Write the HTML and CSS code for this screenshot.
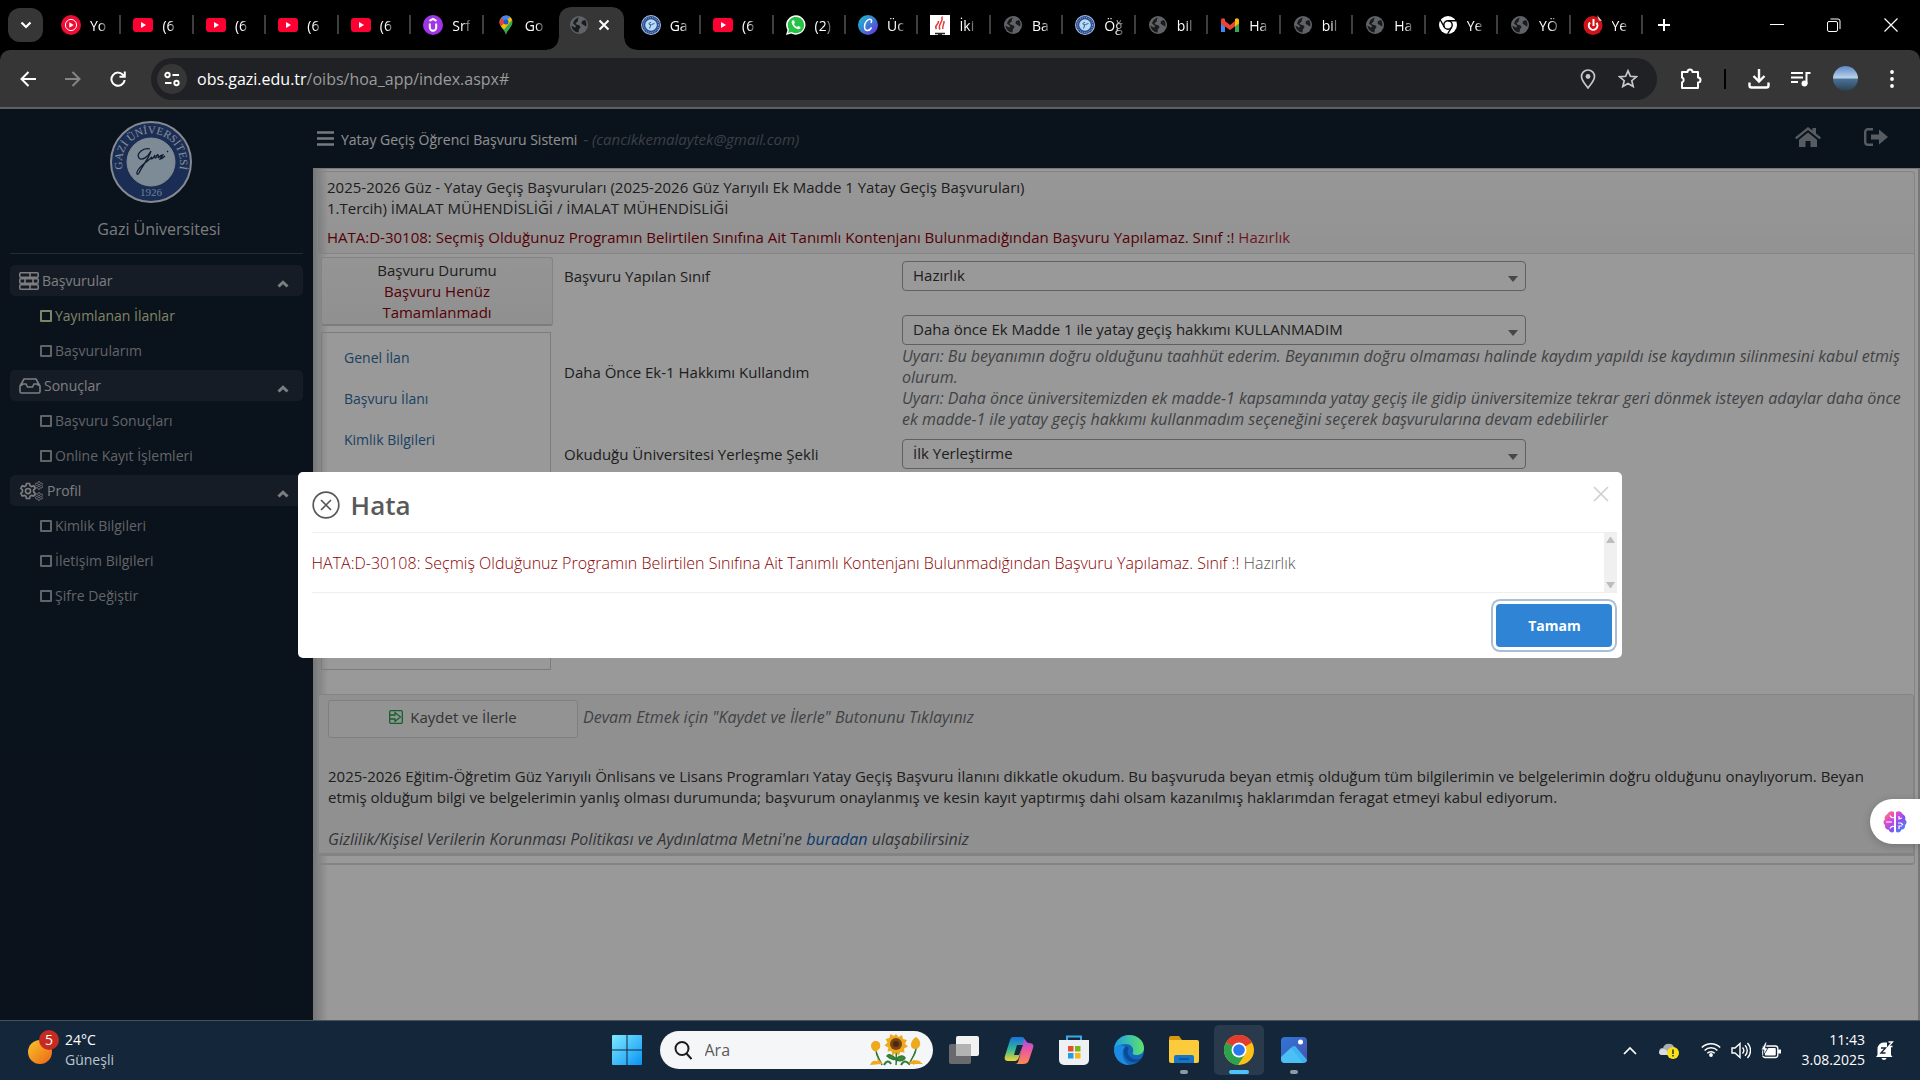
FILE: index.html
```
<!DOCTYPE html>
<html lang="tr">
<head>
	<meta charset="UTF-8">
	<title>Yatay Geçiş Öğrenci Başvuru Sistemi</title>
	<link rel="stylesheet" href="styles.css">
</head>
<body>

<!-- shared icons -->
<svg class="defs" aria-hidden="true">
	<defs>
		<linearGradient id="g-canva" x1="0" y1="0" x2="1" y2="1"><stop offset="0" stop-color="#12c6cc"/><stop offset="1" stop-color="#6a2ce0"/></linearGradient>
		<linearGradient id="g-win" x1="0" y1="0" x2="1" y2="1"><stop offset="0" stop-color="#7eeaff"/><stop offset="1" stop-color="#0a93f5"/></linearGradient>
		<linearGradient id="g-sun" x1="0" y1="0" x2="1" y2="1"><stop offset="0" stop-color="#f7c52e"/><stop offset="1" stop-color="#ee6414"/></linearGradient>
		<linearGradient id="g-cop1" x1="0" y1="0" x2="0" y2="1"><stop offset="0" stop-color="#1b6fe0"/><stop offset=".5" stop-color="#2fb79b"/><stop offset="1" stop-color="#f5d330"/></linearGradient>
		<linearGradient id="g-cop2" x1="0" y1="0" x2="0" y2="1"><stop offset="0" stop-color="#a44cf0"/><stop offset=".5" stop-color="#ee5c96"/><stop offset="1" stop-color="#fb8a50"/></linearGradient>
		<linearGradient id="g-edge" x1="0" y1="0" x2="1" y2="0"><stop offset="0" stop-color="#1a9fe8"/><stop offset="1" stop-color="#5fe36a"/></linearGradient>
		<linearGradient id="g-photo" x1="0" y1="0" x2="1" y2="1"><stop offset="0" stop-color="#2f78d8"/><stop offset="1" stop-color="#4a4fae"/></linearGradient>
		<linearGradient id="g-brain" x1="0" y1="0" x2="1" y2="1"><stop offset="0" stop-color="#ff9a3c"/><stop offset=".3" stop-color="#e84bc8"/><stop offset=".6" stop-color="#8a50f0"/><stop offset="1" stop-color="#2d9cf5"/></linearGradient>
		<linearGradient id="g-sky" x1="0" y1="0" x2="0" y2="1"><stop offset="0" stop-color="#5b86c8"/><stop offset=".48" stop-color="#bcd3e8"/><stop offset=".52" stop-color="#4a7298"/><stop offset="1" stop-color="#2a4050"/></linearGradient>
	</defs>
	<symbol id="i-yt" viewBox="0 0 20 20"><rect y="3" width="20" height="14" rx="3" fill="#ff0033"/><path d="M8 7v6l5-3z" fill="#fff"/></symbol>
	<symbol id="i-ytm" viewBox="0 0 20 20"><circle cx="10" cy="10" r="10" fill="#f00d35"/><circle cx="10" cy="10" r="5.6" fill="none" stroke="#fff" stroke-width="1"/><path d="M8.3 7.2v5.6l4.4-2.8z" fill="#fff"/></symbol>
	<symbol id="i-udemy" viewBox="0 0 20 20"><circle cx="10" cy="10" r="10" fill="#a035e8"/><path d="M6.500 5.800L10 3.800l3.500 2M6.800 8.500v4a3.200 3.200 0 0 0 6.400 0v-4" fill="none" stroke="#fff" stroke-width="2"/></symbol>
	<symbol id="i-maps" viewBox="0 0 20 20"><path d="M10 20C9 15 3.500 12 3.500 7a6.500 6.500 0 0 1 13 0C16.500 12 11 15 10 20z" fill="#34a853"/><path d="M5 3A6.500 6.500 0 0 1 14.500 2.300L10 7z" fill="#4285f4"/><path d="M5 2.900L10 7l-5 4.500A7 7 0 0 1 5 2.900z" fill="#ea4335"/><path d="M5 11.500L14 2a7 7 0 0 1 2 3L8 14.500z" fill="#fbbc04"/><circle cx="10" cy="7" r="2.500" fill="#1b5dc8"/></symbol>
	<symbol id="i-globe" viewBox="0 0 20 20"><circle cx="10" cy="10" r="9" fill="#5f6368"/><path d="M11 2.500C9 3 8.500 4.500 9 6l-2.500 2.500C7 10 9 9.500 10.500 10.500 12 11.500 11.500 13 10 14l-.5 3.500C6 17.500 2.800 14.500 2.500 10.500L5 12c1.500 1 2.500 0 1.500-1.500L4 8.500A8 8 0 0 1 11 2.500zM13 6l3-1c1.500 2 1.800 4 1.200 6.500L14.500 10 12.500 8.500z" fill="#1b1b1c"/></symbol>
	<symbol id="i-gazi" viewBox="0 0 20 20"><circle cx="10" cy="10" r="10" fill="#a9bde0"/><circle cx="10" cy="10" r="9" fill="#27488c"/><circle cx="10" cy="10" r="7.500" fill="none" stroke="#7f9acb" stroke-width="1.200" stroke-dasharray="1 1"/><circle cx="10" cy="10" r="5.800" fill="#b8dcf5"/><path d="M10 7.500c-3 0-2.500 3 0 2l-1.500 4M10.500 9.500l3-1" fill="none" stroke="#27488c" stroke-width=".9"/></symbol>
	<symbol id="i-wa" viewBox="0 0 20 20"><path d="M0 20l1.500-5A9.700 9.700 0 1 1 5.200 18.500z" fill="#fff"/><path d="M2 18l1-3.500A8.200 8.200 0 1 1 5.500 17z" fill="#25c246"/><path d="M7 5.300c-1.500.5-1.800 2-.8 3.900 1.300 2.500 3 4.200 5.800 5 1.500.3 2.500-.6 2.500-2.200l-2.300-1.100-1.200 1.200C9.500 11.500 8.500 10.500 8 9l.9-1.200L8 5.300z" fill="#fff"/></symbol>
	<symbol id="i-canva" viewBox="0 0 20 20"><circle cx="10" cy="10" r="10" fill="url(#g-canva)"/><path d="M13.200 7.500c.8-1.500.4-3.200-1.300-3.200C9 4.300 6.500 8 6.500 11.500c0 2.500 1.300 4 3 4 1.600 0 2.800-1 3.700-2.500" fill="none" stroke="#fff" stroke-width="1.500" stroke-linecap="round"/></symbol>
	<symbol id="i-flame" viewBox="0 0 20 20"><rect width="20" height="20" fill="#fff"/><path d="M6.500 14c-3-4 2.500-4 2-8M10 14.500c-3-4.500 3.500-7 2-13M13 14c-1.500-3 1.500-4 1-8" fill="none" stroke="#e03a36" stroke-width="1.500"/><path d="M5 18.500h10M8 19.500h4" stroke="#222" stroke-width="1.500"/></symbol>
	<symbol id="i-gmail" viewBox="0 0 20 20"><path d="M1 4.500V17h4V8z" fill="#4285f4"/><path d="M19 4.500V17h-4V8z" fill="#34a853"/><path d="M1 5v3l4 3.500V6z" fill="#c5221f"/><path d="M5 6l5 4 5-4v5.500L10 15l-5-3.500z" fill="#ea4335"/><path d="M1 5.500C1 3 3.500 2.500 5 4v7.500L1 8.500z" fill="#ea4335"/><path d="M19 5.500C19 3 16.500 2.500 15 4v7.500l4-3z" fill="#fbbc04"/></symbol>
	<symbol id="i-chromew" viewBox="0 0 20 20"><circle cx="10" cy="10" r="9" fill="#fff"/><circle cx="10" cy="10" r="4.200" fill="none" stroke="#000" stroke-width="1.400"/><path d="M10 5.800h8M6.300 12L2.300 5M13.600 12.200L9.600 19" stroke="#000" stroke-width="1.400"/></symbol>
	<symbol id="i-power" viewBox="0 0 20 20"><circle cx="10" cy="10.500" r="9.500" fill="#d0121a"/><path d="M7 7.500a4.300 4.300 0 1 0 6.500.3M10.500 4v7" fill="none" stroke="#fff" stroke-width="2"/><path d="M14 0l5 6-3-.5z" fill="#ddd"/></symbol>
	<symbol id="i-up" viewBox="0 0 12 8"><path d="M1.500 6.500L6 2.200l4.500 4.300" fill="none" stroke="currentColor" stroke-width="3"/></symbol>
	<symbol id="i-gear" viewBox="0 0 24 24"><path d="M10 2h4l.7 3 2 1.100 2.900-1 2 3.500-2.200 2v2.600l2.200 2.100-2 3.500-2.900-1-2 1.200-.7 3h-4l-.7-3-2-1.200-2.900 1-2-3.500 2.200-2.100v-2.600l-2.200-2 2-3.500 2.900 1 2-1.100z" fill="none" stroke="currentColor" stroke-width="2.200"/><circle cx="12" cy="12" r="3.400" fill="none" stroke="currentColor" stroke-width="2.200"/></symbol>
</svg>

<header class="browser">
	<div class="tab-strip">
		<button class="tab-search" aria-label="Sekme ara"><svg width="14" height="10" viewBox="0 0 14 10"><path d="M2.500 2.500L7 7l4.500-4.500" fill="none" stroke="#fff" stroke-width="2.200"/></svg></button>
		<div class="tabs">
			<button class="tab"><svg><use href="#i-ytm"/></svg><span>Yo</span></button>
			<button class="tab"><svg><use href="#i-yt"/></svg><span>(6</span></button>
			<button class="tab"><svg><use href="#i-yt"/></svg><span>(6</span></button>
			<button class="tab"><svg><use href="#i-yt"/></svg><span>(6</span></button>
			<button class="tab"><svg><use href="#i-yt"/></svg><span>(6</span></button>
			<button class="tab"><svg><use href="#i-udemy"/></svg><span>Srf</span></button>
			<button class="tab no-line"><svg><use href="#i-maps"/></svg><span>Go</span></button>
			<button class="tab active"><svg><use href="#i-globe"/></svg><svg class="tab-x" viewBox="0 0 12 12"><path d="M1.500 1.500l9 9M10.500 1.500l-9 9" stroke="#fff" stroke-width="2"/></svg></button>
			<button class="tab"><svg><use href="#i-gazi"/></svg><span>Ga</span></button>
			<button class="tab"><svg><use href="#i-yt"/></svg><span>(6</span></button>
			<button class="tab"><svg><use href="#i-wa"/></svg><span>(2)</span></button>
			<button class="tab"><svg><use href="#i-canva"/></svg><span>Üc</span></button>
			<button class="tab"><svg><use href="#i-flame"/></svg><span>İki</span></button>
			<button class="tab"><svg><use href="#i-globe"/></svg><span>Ba</span></button>
			<button class="tab"><svg><use href="#i-gazi"/></svg><span>Öğ</span></button>
			<button class="tab"><svg><use href="#i-globe"/></svg><span>bil</span></button>
			<button class="tab"><svg><use href="#i-gmail"/></svg><span>Ha</span></button>
			<button class="tab"><svg><use href="#i-globe"/></svg><span>bil</span></button>
			<button class="tab"><svg><use href="#i-globe"/></svg><span>Ha</span></button>
			<button class="tab"><svg><use href="#i-chromew"/></svg><span>Ye</span></button>
			<button class="tab"><svg><use href="#i-globe"/></svg><span>YÖ</span></button>
			<button class="tab"><svg><use href="#i-power"/></svg><span>Ye</span></button>
		</div>
		<div class="window-area">
			<button class="new-tab" aria-label="Yeni sekme"><svg width="14" height="14" viewBox="0 0 14 14"><path d="M7 1v12M1 7h12" stroke="#fff" stroke-width="2"/></svg></button>
			<div class="window-buttons">
				<button aria-label="Küçült"><svg width="14" height="14" viewBox="0 0 14 14"><path d="M0 6.500h14" stroke="#fff"/></svg></button>
				<button aria-label="Geri yükle"><svg width="14" height="14" viewBox="0 0 14 14"><rect x=".5" y="3.500" width="10" height="10" rx="1.500" fill="none" stroke="#fff"/><path d="M3.500 1h7.500a2 2 0 0 1 2 2v8" fill="none" stroke="#fff"/></svg></button>
				<button aria-label="Kapat"><svg width="14" height="14" viewBox="0 0 14 14"><path d="M.5.5l13 13M13.500.5l-13 13" stroke="#fff" stroke-width="1.200"/></svg></button>
			</div>
		</div>
	</div>

	<div class="toolbar">
		<div class="nav-buttons">
			<button aria-label="Geri"><svg width="16" height="16" viewBox="0 0 16 16"><path d="M8.500 1L1.500 8l7 7M2 8h14" fill="none" stroke="#fff" stroke-width="2"/></svg></button>
			<button aria-label="İleri"><svg width="16" height="16" viewBox="0 0 16 16"><path d="M7.500 1l7 7-7 7M14 8H0" fill="none" stroke="#858585" stroke-width="2"/></svg></button>
			<button aria-label="Yenile"><svg width="16" height="16" viewBox="0 0 16 16"><path d="M13.500 4.500A6.600 6.600 0 1 0 14.600 9M14.800.5v5.300H9.500" fill="none" stroke="#fff" stroke-width="2"/></svg></button>
		</div>
		<div class="address">
			<button class="site-info" aria-label="Site bilgileri"><svg width="16" height="16" viewBox="0 0 16 16"><g fill="none" stroke="#fff" stroke-width="1.900"><circle cx="3.500" cy="4" r="2.200"/><path d="M8.500 4H15M1 12h6.500"/><circle cx="12.500" cy="12" r="2.200"/></g></svg></button>
			<span class="url">obs.gazi.edu.tr<i>/oibs/hoa_app/index.aspx#</i></span>
			<button aria-label="Konum"><svg width="16" height="20" viewBox="0 0 16 20"><path d="M8 19C5 15 1.500 11.500 1.500 7.500a6.500 6.500 0 0 1 13 0C14.500 11.500 11 15 8 19z" fill="none" stroke="#c7c7c7" stroke-width="1.700"/><circle cx="8" cy="7.500" r="2.400" fill="#c7c7c7"/></svg></button>
			<button aria-label="Yer işareti"><svg width="20" height="20" viewBox="0 0 20 20"><path d="M10 1.800l2.400 5.500 5.900.5-4.500 3.900 1.400 5.900L10 14.500l-5.200 3.100 1.400-5.900L1.700 7.800l5.900-.5z" fill="none" stroke="#c7c7c7" stroke-width="1.700"/></svg></button>
		</div>
		<div class="tool-icons">
			<button aria-label="Uzantılar"><svg width="22" height="22" viewBox="0 0 22 22"><path d="M2 4h5.500a2.500 2.500 0 0 1 5 0H18v5.500a2.500 2.500 0 0 1 0 5V20H2v-5.500a2.700 2.700 0 0 0 0-5z" fill="none" stroke="#fff" stroke-width="2" stroke-linejoin="round"/></svg></button>
			<span class="divider"></span>
			<button aria-label="İndirilenler"><svg width="22" height="20" viewBox="0 0 22 20"><path d="M11 0v12M5.500 7l5.500 5.500L16.500 7M1.500 13.500v3a2 2 0 0 0 2 2h15a2 2 0 0 0 2-2v-3" fill="none" stroke="#fff" stroke-width="2.400"/></svg></button>
			<button aria-label="Medya"><svg width="20" height="16" viewBox="0 0 20 16"><path d="M0 2h12M0 6.500h12M0 11h7M15.500 13V2h4" fill="none" stroke="#fff" stroke-width="2"/><circle cx="13.500" cy="12.500" r="3" fill="#fff"/></svg></button>
			<button aria-label="Profil"><svg width="25" height="25" viewBox="0 0 25 25"><circle cx="12.500" cy="12.500" r="12.500" fill="url(#g-sky)"/></svg></button>
			<button class="more" aria-label="Menü"><svg width="4" height="18" viewBox="0 0 4 18"><g fill="#fff"><circle cx="2" cy="2" r="1.900"/><circle cx="2" cy="9" r="1.900"/><circle cx="2" cy="16" r="1.900"/></g></svg></button>
		</div>
	</div>
</header>

<div class="page">
	<nav class="sidebar">
		<svg class="crest" viewBox="0 0 82 82">
			<circle cx="41" cy="41" r="40" fill="#2a4b8e" stroke="#dfe6f0" stroke-width="2"/>
			<circle cx="41" cy="41" r="24" fill="#d0e8fb" stroke="#dfe6f0" stroke-width="1"/>
			<path id="crest-arc" d="M15.900 56.100A29 29 0 1 1 66.100 56.100" fill="none"/>
			<text class="crest-name"><textPath href="#crest-arc" startOffset="50%">GAZİ ÜNİVERSİTESİ</textPath></text>
			<text class="crest-year" x="41" y="75">1926</text>
			<path d="M40 28c-7-2-14 5-11 9 3 3 9-1 12-7-2 7-10 17-12 22-2 3-3 0-1-3 3-5 10-9 14-13-2 1-1 3 1 1l2-3c-1 4 1 4 2 0 1-1 2 0 1 3 1-1 3-3 5-3l-3 4c2 0 3-1 5-3M58 30l-1 1" fill="none" stroke="#1c2d52" stroke-width="1.300"/>
		</svg>
		<h1>Gazi Üniversitesi</h1>

		<div class="menu">
			<button class="menu-head">
				<svg width="20" height="18" viewBox="0 0 20 18"><g fill="none" stroke="currentColor" stroke-width="1.600"><rect x=".8" y=".8" width="18.400" height="4.400" rx="1"/><rect x=".8" y="6.800" width="18.400" height="4.400" rx="1"/><rect x=".8" y="12.800" width="18.400" height="4.400" rx="1"/><path d="M11 1v4M6 7v4M14 7v4M11 13v4"/></g></svg>
				<span>Başvurular</span>
				<svg class="chev"><use href="#i-up"/></svg>
			</button>
			<a class="current" href="#">Yayımlanan İlanlar</a>
			<a href="#">Başvurularım</a>

			<button class="menu-head">
				<svg width="22" height="16" viewBox="0 0 22 16"><path d="M1 8l4-7h12l4 7v5.500a1.500 1.500 0 0 1-1.500 1.500h-17A1.500 1.500 0 0 1 1 13.500zM2 7.500L4 6h3l1.500 3h5L15 6h3l2 1.500" fill="none" stroke="currentColor" stroke-width="1.600"/></svg>
				<span>Sonuçlar</span>
				<svg class="chev"><use href="#i-up"/></svg>
			</button>
			<a href="#">Başvuru Sonuçları</a>
			<a href="#">Online Kayıt İşlemleri</a>

			<button class="menu-head">
				<svg width="25" height="20" viewBox="0 0 25 20"><use href="#i-gear" x="0" y="1" width="18" height="18"/><use href="#i-gear" x="15" y="0" width="10" height="9"/><use href="#i-gear" x="15" y="11" width="10" height="9"/></svg>
				<span>Profil</span>
				<svg class="chev"><use href="#i-up"/></svg>
			</button>
			<a href="#">Kimlik Bilgileri</a>
			<a href="#">İletişim Bilgileri</a>
			<a href="#">Şifre Değiştir</a>
		</div>
	</nav>

	<div class="main">
		<div class="topbar">
			<svg width="17" height="15" viewBox="0 0 17 15"><path d="M0 1.500h17M0 7.500h17M0 13.500h17" stroke="#c3cbd2" stroke-width="2.600"/></svg>
			<strong>Yatay Geçiş Öğrenci Başvuru Sistemi</strong>
			<em>- (cancikkemalaytek@gmail.com)</em>
			<a href="#" aria-label="Ana sayfa"><svg width="26" height="20" viewBox="0 0 26 20"><path d="M0 10.500L13 0l4.500 3.600V1H21v5.400l5 4.100-1.500 1.800L13 3 1.500 12.300z" fill="#909aa3"/><path d="M13 5.500l9 7.200V20h-6.500v-6h-5v6H4v-7.300z" fill="#909aa3"/></svg></a>
			<a href="#" aria-label="Çıkış"><svg width="24" height="18" viewBox="0 0 24 18"><path d="M9 1.200H4A2.800 2.800 0 0 0 1.200 4v10A2.800 2.800 0 0 0 4 16.800h5" fill="none" stroke="#909aa3" stroke-width="2.400"/><path d="M7 6.500h8V1.500L24 9l-9 7.500v-5H7z" fill="#909aa3"/></svg></a>
		</div>

		<div class="content">
			<div class="panel">
				<div class="panel-head">
					<p>2025-2026 Güz - Yatay Geçiş Başvuruları (2025-2026 Güz Yarıyılı Ek Madde 1 Yatay Geçiş Başvuruları)<br>1.Tercih) İMALAT MÜHENDİSLİĞİ / İMALAT MÜHENDİSLİĞİ</p>
					<p class="error">HATA:D-30108: Seçmiş Olduğunuz Programın Belirtilen Sınıfına Ait Tanımlı Kontenjanı Bulunmadığından Başvuru Yapılamaz. Sınıf :! <span>Hazırlık</span></p>
				</div>

				<div class="panel-body">
					<aside>
						<div class="status">Başvuru Durumu<br><b>Başvuru Henüz<br>Tamamlanmadı</b></div>
						<div class="steps">
							<a href="#">Genel İlan</a>
							<a href="#">Başvuru İlanı</a>
							<a href="#">Kimlik Bilgileri</a>
						</div>
					</aside>
					<form class="fields">
						<div class="field first">
							<label for="sinif">Başvuru Yapılan Sınıf</label>
							<div><div class="select"><select id="sinif"><option>Hazırlık</option></select></div></div>
						</div>
						<div class="field">
							<label for="ek1">Daha Önce Ek-1 Hakkımı Kullandım</label>
							<div>
								<div class="select"><select id="ek1"><option>Daha önce Ek Madde 1 ile yatay geçiş hakkımı KULLANMADIM</option></select></div>
								<p class="note">Uyarı: Bu beyanımın doğru olduğunu taahhüt ederim. Beyanımın doğru olmaması halinde kaydım yapıldı ise kaydımın silinmesini kabul etmiş olurum.<br>Uyarı: Daha önce üniversitemizden ek madde-1 kapsamında yatay geçiş ile gidip üniversitemize tekrar geri dönmek isteyen adaylar daha önce ek madde-1 ile yatay geçiş hakkımı kullanmadım seçeneğini seçerek başvurularına devam edebilirler</p>
							</div>
						</div>
						<div class="field">
							<label for="yerlesme">Okuduğu Üniversitesi Yerleşme Şekli</label>
							<div><div class="select"><select id="yerlesme"><option>İlk Yerleştirme</option></select></div></div>
						</div>
					</form>
				</div>

				<div class="panel-foot">
					<div class="save-row">
						<button class="save"><svg width="14" height="14" viewBox="0 0 14 14"><g fill="none" stroke="#22a04a" stroke-width="1.300"><rect x=".7" y=".7" width="12.600" height="12.600" rx="1"/><path d="M1 5h5V2.500L11.500 7 6 11.500V9H1"/></g></svg>Kaydet ve İlerle</button>
						<em>Devam Etmek için "Kaydet ve İlerle" Butonunu Tıklayınız</em>
					</div>
					<p>2025-2026 Eğitim-Öğretim Güz Yarıyılı Önlisans ve Lisans Programları Yatay Geçiş Başvuru İlanını dikkatle okudum. Bu başvuruda beyan etmiş olduğum tüm bilgilerimin ve belgelerimin doğru olduğunu onaylıyorum. Beyan etmiş olduğum bilgi ve belgelerimin yanlış olması durumunda; başvurum onaylanmış ve kesin kayıt yaptırmış dahi olsam kazanılmış haklarımdan feragat etmeyi kabul ediyorum.</p>
					<p class="privacy">Gizlilik/Kişisel Verilerin Korunması Politikası ve Aydınlatma Metni'ne <a href="#">buradan</a> ulaşabilirsiniz</p>
				</div>
			</div>
		</div>
	</div>

	<div class="overlay">
		<div class="modal" role="dialog" aria-labelledby="modal-title">
			<div class="modal-head">
				<svg width="28" height="28" viewBox="0 0 28 28"><g fill="none" stroke="#595959" stroke-width="1.700"><circle cx="14" cy="14" r="12.800"/><path d="M9 9l10 10M19 9L9 19"/></g></svg>
				<h2 id="modal-title">Hata</h2>
				<button class="modal-close" aria-label="Kapat"><svg width="16" height="16" viewBox="0 0 16 16"><path d="M1 1l14 14M15 1L1 15" stroke="#cfcfcf" stroke-width="1.600"/></svg></button>
			</div>
			<div class="modal-body">
				<p>HATA:D-30108: Seçmiş Olduğunuz Programın Belirtilen Sınıfına Ait Tanımlı Kontenjanı Bulunmadığından Başvuru Yapılamaz. Sınıf :! <span>Hazırlık</span></p>
				<div class="scrollbar"></div>
			</div>
			<div class="modal-foot">
				<button class="ok">Tamam</button>
			</div>
		</div>
	</div>

	<button class="assistant" aria-label="Asistan"><svg width="24" height="22" viewBox="0 0 24 22"><path d="M11 1C8-1 5 1 4.500 3 2 4 1 6.500 2 8.500c-2 1.500-2 4 0 5.500-.5 3 1.500 4.500 3.500 4.500C6.500 22 10 22 11 20.500zM13 1c3-2 6 0 6.500 2 2.500 1 3.500 3.500 2.500 5.500 2 1.500 2 4 0 5.500.5 3-1.500 4.500-3.500 4.500-1 3.500-4.500 3.500-5.500 2z" fill="url(#g-brain)"/><path d="M3 11h6M11 6.500C9 7 7.500 6 7 4.500M11 15.500c-2-.5-3.500.5-4 2M16 5v3l3-1M15 12h3l2 2M16 18v-3h3" fill="none" stroke="#fff" stroke-width="1.200"/></svg></button>
</div>

<footer class="taskbar">
	<button class="weather">
		<svg width="32" height="36" viewBox="0 0 32 36"><circle cx="12" cy="22" r="12" fill="url(#g-sun)"/><circle cx="21" cy="10" r="10" fill="#c52b20"/><text x="21" y="15">5</text></svg>
		<span>24°C<br><i>Güneşli</i></span>
	</button>

	<div class="apps">
		<button aria-label="Başlat"><svg width="30" height="30" viewBox="0 0 30 30"><path d="M1 0h13.500v14.500H0V1a1 1 0 0 1 1-1zM15.500 0H29a1 1 0 0 1 1 1v13.500H15.500zM0 15.500h14.500V30H1a1 1 0 0 1-1-1zM15.500 15.500H30V29a1 1 0 0 1-1 1H15.500z" fill="url(#g-win)"/></svg></button>
		<label class="search">
			<svg width="18" height="19" viewBox="0 0 18 19"><g fill="none" stroke="#1c1c1c" stroke-width="2"><circle cx="8" cy="7.500" r="6.500"/><path d="M12.500 12.500l5 5.500"/></g></svg>
			<input type="text" placeholder="Ara" aria-label="Ara">
			<svg width="54" height="32" viewBox="0 0 54 32"><path d="M26 14c0 6 1 10 0 17M6 16c0 7 4 9 6 15M46 14c0 7-5 10-7 17M26 25c-4-5-8-5-9-3 3 3 6 4 9 3zm0 1c3-5 8-5 9-2-2 3-6 3-9 2z" fill="#3c8a3a" stroke="#2f7a35" stroke-width="1.500"/><g fill="#efa91c"><path d="M26 0l2.500 3L32 1l1 4 4 1-2 3.500 3 3-4 2 .5 4-4-.5-2 3.500-2.500-3-3.500 3-1-4.500-4 .5 1-4-4-2 3-3-2-3.500 4-1 1-4 3.500 2z"/><path d="M1 12c0-3 2-5 5-5s5 2 4 7l-4 4c-3-1-5-3-5-6zM41 11c0-4 3-7 5-8 3 2 5 5 4 8s-3 4-5 4-4-1-4-4z"/><path d="M0 31c2-5 6-6 11-1zM38 30c4-5 10-4 15 0zM7 24l6 6H8zM43 26l8 1-8 4z"/></g><circle cx="26" cy="10" r="6" fill="#7a4414"/><circle cx="26" cy="10" r="3" fill="#4e2a0c"/><path d="M14 31c2-4 5-5 7-1M31 31c2-4 5-5 8-1" fill="none" stroke="#2f7a35" stroke-width="2"/></svg>
		</label>
		<button aria-label="Görev görünümü"><svg width="30" height="30" viewBox="0 0 30 30"><rect x="7" y="1" width="23" height="20" rx="2" fill="#f2f2f2"/><rect x="0" y="9" width="22" height="20" rx="2" fill="#777" fill-opacity=".85"/><path d="M7 9h15v12H7z" fill="#b3b3b3"/></svg></button>
		<button aria-label="Copilot"><svg width="30" height="28" viewBox="0 0 30 28"><path d="M9 1h9c2 0 3 2 2.500 3.500L15 21c-1 3-2 4-5 4H4c-3 0-4-2-3-5L6 4c1-2 1-3 3-3z" fill="url(#g-cop1)"/><path d="M20 3c2 0 2 4 5 4 4 0 5 2 4 5l-4 12c-1 3-3 4-6 4h-8c3 0 3-2 4-5z" fill="url(#g-cop2)"/><path d="M13 9h6l-4 10h-5z" fill="#15263a"/></svg></button>
		<button aria-label="Store"><svg width="30" height="30" viewBox="0 0 30 30"><path d="M8 6V1.500h14V6" fill="none" stroke="#3aa9ea" stroke-width="2"/><path d="M0 5h30v20a5 5 0 0 1-5 5H5a5 5 0 0 1-5-5z" fill="#eef1f4"/><path d="M9 11h5.500v5.500H9z" fill="#e5502b"/><path d="M16 11h5.500v5.500H16z" fill="#7cb518"/><path d="M9 18h5.500v5.500H9z" fill="#1d9ee8"/><path d="M16 18h5.500v5.500H16z" fill="#f7b51a"/></svg></button>
		<button aria-label="Edge"><svg width="30" height="30" viewBox="0 0 30 30"><circle cx="15" cy="15" r="15" fill="#1367bd"/><path d="M0 14C1 5 8 0 15 0c9 0 15 6 15 13 0 5-4 7-7 7-4 0-5-1-4-3 1-3-1-8-7-8C5 9 1 12 0 14z" fill="url(#g-edge)"/><path d="M11 12c-3 4-1 12 6 15 5 1 9-1 11-4-5 3-12 1-14-4-1-3 0-5 1-6-1-1-3-2-4-1z" fill="#0b4a94"/><path d="M0 14c2-4 6-5 11-2-4 4-3 13 4 18C6 30 0 23 0 14z" fill="#1b8ae0"/></svg></button>
		<button class="running" aria-label="Dosya Gezgini"><svg width="30" height="28" viewBox="0 0 30 28"><path d="M0 2a2 2 0 0 1 2-2h8l3 4H0z" fill="#d69a12"/><path d="M0 4h28a2 2 0 0 1 2 2v19a2 2 0 0 1-2 2H2a2 2 0 0 1-2-2z" fill="#fbcb3c"/><path d="M5 27v-6a2 2 0 0 1 2-2h16a2 2 0 0 1 2 2v6z" fill="#1674c9"/><path d="M10 23h10" stroke="#0a4f92" stroke-width="1.500"/></svg></button>
		<button class="running focused" aria-label="Chrome"><svg width="30" height="30" viewBox="0 0 30 30"><circle cx="15" cy="15" r="15" fill="#fbc116"/><path d="M15 15L2 7.500a15 15 0 0 1 26 0z" fill="#e33b2e"/><path d="M15 15L2 7.500A15 15 0 0 0 14 30l7.500-11.500z" fill="#2ba24c"/><circle cx="15" cy="15" r="7.500" fill="#fff"/><circle cx="15" cy="15" r="5.800" fill="#2a78ee"/></svg></button>
		<button class="running" aria-label="Fotoğraflar"><svg width="26" height="26" viewBox="0 0 26 26"><rect width="26" height="26" rx="4" fill="url(#g-photo)"/><path d="M0 20L11 10c1.500-1.500 3-1.500 4 0l11 13c0 2-2 3-4 3H4c-2 0-4-1-4-4z" fill="#3fb4f0"/><path d="M0 20l10-9.500L22 26H4c-2 0-4-1-4-4z" fill="#56ccf8" fill-opacity=".5"/><circle cx="19.500" cy="5" r="2.500" fill="#fff"/></svg></button>
	</div>

	<div class="tray">
		<svg width="14" height="9" viewBox="0 0 14 9"><path d="M1 8l6-6 6 6" fill="none" stroke="#fff" stroke-width="1.700"/></svg>
		<svg width="20" height="17" viewBox="0 0 20 17"><path d="M3.500 13A3.500 3.500 0 0 1 4 6a6 6 0 0 1 11.500 0A4 4 0 0 1 17 13z" fill="#a9adb3"/><path d="M0 10c1-3 4-4 7-2l5 5H3c-2 0-3-1-3-3z" fill="#dadde0"/><circle cx="14" cy="11" r="6" fill="#f9e11a"/><path d="M14 7.500v4.500M14 13v1.600" stroke="#222" stroke-width="1.400"/></svg>
		<div class="tray-group">
			<svg width="20" height="15" viewBox="0 0 20 15"><g fill="none" stroke="#fff" stroke-width="1.500"><path d="M.8 5.500a13 13 0 0 1 18.400 0M3.600 8.500a9 9 0 0 1 12.800 0M6.300 11.300a5.200 5.200 0 0 1 7.400 0"/></g><circle cx="10" cy="13" r="1.900" fill="#fff"/></svg>
			<svg width="20" height="17" viewBox="0 0 20 17"><g fill="none" stroke="#fff" stroke-width="1.400"><path d="M1 6h3l5-4.500v14L4 11H1zM11.500 5.500c1.600 1.800 1.600 4.200 0 6M14 3.200c3 3 3 7.600 0 10.600M16.500 1c4 4.200 4 10.800 0 15"/></g></svg>
			<svg width="20" height="17" viewBox="0 0 20 17"><rect x="1.800" y="4" width="15" height="11.500" rx="2.500" fill="none" stroke="#fff" stroke-width="1.300"/><rect x="3.800" y="6" width="11" height="7.500" rx="1" fill="#fff"/><path d="M17 7.500h3v4h-3z" fill="#fff"/><path d="M4.500 0L0 8h3l-1 6 5-8H4.500L6 0z" fill="#fff" stroke="#15263a" stroke-width=".8"/></svg>
		</div>
		<time>11:43<br>3.08.2025</time>
		<svg width="18" height="19" viewBox="0 0 18 19"><path d="M1.500 14V8a6.500 6.500 0 0 1 6-6.500H11V6h4v8l1.500 2H0z" fill="#fff"/><path d="M5.500 17h5c-.5 2.500-4.500 2.500-5 0z" fill="#fff"/><path d="M5 7h4.500L5 12h4.500" fill="none" stroke="#15263a" stroke-width="1.400"/><path d="M12.500 1h4l-4 4.500h4" fill="none" stroke="#fff" stroke-width="1.300"/></svg>
	</div>
</footer>

</body>
</html>
```
FILE: styles.css
```
*, *::before, *::after{
	box-sizing: border-box;
}
body{
	margin: 0;
	height: 100vh;
	display: flex;
	flex-direction: column;
	overflow: hidden;
	font-family: "Open Sans", "Noto Sans", sans-serif;
	font-size: 15px;
	line-height: 21px;
	color: #333;
	background: #000;
}
button{
	font: inherit;
	color: inherit;
	background: none;
	border: 0;
	padding: 0;
}
svg{
	display: block;
	flex: none;
}
a{
	text-decoration: none;
}
h1, h2, p{
	margin: 0;
}
.defs{
	position: absolute;
	width: 0;
	height: 0;
}

/* browser window */
.browser{
	flex: none;
	color: #fff;
	border-bottom: 2px solid #5f6063;
}
.tab-strip{
	display: flex;
	height: 50px;
}
.tab-search{
	width: 35px;
	height: 34px;
	margin: 8px 5px 0 8px;
	border-radius: 12px;
	background: #363636;
	display: flex;
	align-items: center;
	justify-content: center;
}
.tabs{
	flex: 1;
	display: grid;
	grid-auto-flow: column;
	grid-auto-columns: minmax(0, 1fr);
}
.tab{
	position: relative;
	display: flex;
	align-items: center;
	padding-left: 13px;
}
.tab svg{
	width: 20px;
	height: 20px;
}
.tab span{
	margin-left: 9px;
	font-size: 14px;
	white-space: nowrap;
	-webkit-mask-image: linear-gradient(to right, #000 60%, rgba(0, 0, 0, .3));
	mask-image: linear-gradient(to right, #000 60%, rgba(0, 0, 0, .3));
}
.tab:not(.active):not(.no-line)::after{
	content: "";
	position: absolute;
	right: -1px;
	top: 15px;
	width: 2px;
	height: 19px;
	background: #3f3f3f;
}
.tab.active{
	margin-top: 7px;
	padding: 0 0 7px 10px;
	border: solid transparent;
	border-width: 0 4px;
	border-radius: 16px 16px 0 0 / 12px 12px 0 0;
	background: #363636;
	background-clip: padding-box;
}
.tab.active::before{
	content: "";
	position: absolute;
	left: -12px;
	right: -12px;
	bottom: 0;
	height: 12px;
	background:
		radial-gradient(circle at 0 0, transparent 11px, #363636 12px) left / 12px 12px no-repeat,
		radial-gradient(circle at 100% 0, transparent 11px, #363636 12px) right / 12px 12px no-repeat;
}
.tab .tab-x{
	width: 12px;
	height: 12px;
	margin-left: 9px;
}
.window-area{
	width: 278px;
	display: flex;
	align-items: center;
	justify-content: space-between;
	padding: 0 22px 0 15px;
}
.window-buttons{
	display: flex;
	gap: 43px;
}
.toolbar{
	height: 57px;
	display: flex;
	align-items: center;
	border-radius: 10px 10px 0 0;
	background: #363636;
}
.nav-buttons{
	width: 151px;
	display: flex;
	gap: 29px;
	padding-left: 20px;
}
.address{
	flex: 1;
	height: 42px;
	display: flex;
	align-items: center;
	gap: 22px;
	padding: 0 19px 0 6px;
	border-radius: 21px;
	background: #202124;
}
.site-info{
	width: 30px;
	height: 30px;
	border-radius: 50%;
	display: flex;
	align-items: center;
	justify-content: center;
	background: #363636;
}
.url{
	flex: 1;
	margin-left: -12px;
	padding-top: 2px;
	font-size: 16px;
}
.url i{
	font-style: normal;
	color: #9a9b9d;
}
.tool-icons{
	width: 263px;
	display: flex;
	align-items: center;
	justify-content: space-between;
	padding: 0 26px 0 23px;
}
.divider{
	width: 2px;
	height: 20px;
	background: #000;
}
.more{
	margin-left: 10px;
}

/* page */
.page{
	flex: 1;
	min-height: 0;
	position: relative;
	display: flex;
	background: #fff;
}
.sidebar{
	width: 313px;
	flex: none;
	padding: 12px 10px 0;
	background: #121e2d;
	color: #b9bfc6;
}
.crest{
	width: 82px;
	height: 82px;
	margin: 0 0 0 100px;
}
.crest-name, .crest-year{
	font-family: "Liberation Serif", serif;
	font-size: 11px;
	text-anchor: middle;
	fill: #e6edf6;
}
.crest-year{
	fill: #b7d3ee;
}
.sidebar h1{
	height: 51px;
	padding: 16px 0 0 5px;
	margin-bottom: 9px;
	font-size: 16px;
	font-weight: normal;
	text-align: center;
	color: #cbd0d5;
	border-bottom: 1px solid #3d4854;
}
.menu{
	display: flex;
	flex-direction: column;
}
.menu-head{
	height: 31px;
	margin: 2px 0;
	padding: 0 14px 0 9px;
	display: flex;
	align-items: center;
	gap: 3px;
	border-radius: 5px;
	background: #262f3e;
	color: #d0d3d8;
	font-size: 14px;
}
.chev{
	width: 12px;
	height: 8px;
	margin: 6px 0 0 auto;
}
.menu a{
	height: 35px;
	padding-left: 30px;
	display: flex;
	align-items: center;
	gap: 3px;
	font-size: 14px;
	color: #a3a8ae;
}
.menu a::before{
	content: "";
	width: 12px;
	height: 12px;
	border: 2px solid currentColor;
	border-radius: 1px;
}
.menu a.current{
	color: #d3dcab;
}
.main{
	flex: 1;
	min-width: 0;
	display: flex;
	flex-direction: column;
}
.topbar{
	height: 59px;
	padding: 0 32px 0 4px;
	display: flex;
	align-items: center;
	background: #12202f;
}
.topbar strong{
	margin: 2px 6px 0 7px;
	font-size: 14px;
	font-weight: normal;
	color: #eee;
}
.topbar em{
	flex: 1;
	margin-top: 2px;
	font-size: 15px;
	color: #616b76;
}
.topbar a{
	margin-left: 43px;
	margin-bottom: 4px;
}
.content{
	flex: 1;
	padding: 2px 3px 0 3px;
	border: solid #c8c8c8;
	border-width: 1px 2px 0 1px;
	background: linear-gradient(to right, #c9c9c9, #fff 14px);
}
.panel{
	padding-bottom: 7px;
	border: 1px solid #dcdcdc;
	border-bottom: 2px solid #dadada;
	border-radius: 4px;
}
.panel-head{
	height: 82px;
	padding: 5px 9px;
	background: linear-gradient(rgba(0, 0, 0, .01), rgba(0, 0, 0, .04));
	border-bottom: 1px solid #dcdcdc;
}
.error{
	margin-top: 8px;
	color: #8f000a;
}
.error span{
	color: #b82a38;
}
.panel-body{
	display: flex;
	gap: 11px;
	height: 440px;
	padding: 3px 6px 0 3px;
}
aside{
	width: 232px;
	flex: none;
}
.status{
	height: 69px;
	padding-top: 2px;
	margin-bottom: 6px;
	text-align: center;
	background: linear-gradient(#f8f8f8, #f0f0f0);
	border: 1px solid #dadada;
	border-bottom: 2px solid #cfcfcf;
	border-radius: 3px;
}
.status b{
	font-weight: normal;
	color: #8f000a;
}
.steps{
	width: 230px;
	height: 338px;
	padding: 4px 22px;
	border: 1px solid #cfcfcf;
}
.steps a{
	display: block;
	font-size: 14px;
	line-height: 41px;
	color: #2e6da4;
}
.fields{
	flex: 1;
	padding-top: 4px;
}
.field{
	display: flex;
	align-items: center;
	margin-bottom: 9px;
}
.field.first{
	margin-bottom: 24px;
}
.field label{
	width: 338px;
	flex: none;
}
.field > div{
	flex: 1;
}
.select{
	position: relative;
	width: 62%;
}
.select select{
	display: block;
	width: 100%;
	height: 30px;
	padding: 0 30px 2px 10px;
	font: inherit;
	color: #333;
	background: #fff;
	border: 1px solid #a0a0a0;
	border-radius: 4px;
	appearance: none;
}
.select::after{
	content: "";
	position: absolute;
	right: 8px;
	top: 15px;
	border: 5px solid transparent;
	border-top: 6px solid #777;
	border-bottom: 0;
}
.note{
	font-size: 16px;
	font-style: italic;
	color: #6c6f73;
	padding-top: 1px;
}
.panel-foot{
	height: 162px;
	padding: 5px 9px 0 9px;
	background: #f1f1f1;
	border: 1px solid #dcdcdc;
	border-bottom: 3px solid #dadada;
	border-radius: 4px 4px 0 0;
}
.save-row{
	display: flex;
	align-items: center;
	gap: 5px;
	margin-bottom: 28px;
	color: #6c6f73;
}
.save-row em{
	padding-bottom: 3px;
	font-size: 16px;
}
.save{
	width: 250px;
	height: 38px;
	padding-bottom: 4px;
	display: flex;
	align-items: center;
	justify-content: center;
	gap: 7px;
	color: #555;
	background: #f6f6f6;
	border: 1px solid #d4d4d4;
	border-radius: 3px;
}
.privacy{
	margin-top: 21px;
	font-size: 16px;
	font-style: italic;
	color: #55585c;
}
.privacy a{
	color: #0d5bb5;
}

/* error dialog */
.overlay{
	position: absolute;
	inset: 0;
	display: flex;
	align-items: center;
	justify-content: center;
	background: rgba(0, 0, 0, .4);
}
.modal{
	width: 69%;
	padding: 0 5px 6px 14px;
	border-radius: 5px;
	background: #fff;
}
.modal-head{
	height: 60px;
	display: flex;
	align-items: center;
	padding-top: 6px;
}
.modal-head h2{
	margin-left: 11px;
	font-size: 26px;
	line-height: 32px;
	font-weight: 600;
	color: #595959;
}
.modal-close{
	margin: -22px 8px 0 auto;
}
.modal-body{
	height: 61px;
	display: flex;
	align-items: center;
	justify-content: space-between;
	border: solid #eee;
	border-width: 1px 0;
}
.modal-body p{
	padding-top: 2px;
	font-size: 16px;
	font-weight: 300;
	color: #8b0000;
}
.modal-body span{
	color: #545454;
}
.scrollbar{
	width: 13px;
	height: 100%;
	padding: 4px 2px;
	display: flex;
	flex-direction: column;
	justify-content: space-between;
	background: #f0f0f0;
}
.scrollbar::before, .scrollbar::after{
	content: "";
	border: solid transparent;
	border-width: 0 4px 6px;
	border-bottom-color: #bdbdbd;
}
.scrollbar::after{
	border-width: 6px 4px 0;
	border-color: #bdbdbd transparent;
}
.modal-foot{
	display: flex;
	justify-content: flex-end;
	padding: 11px 5px 5px;
}
.ok{
	width: 116px;
	height: 43px;
	font-size: 14px;
	font-weight: bold;
	color: #fff;
	background: #2f84d6;
	border-radius: 4px;
	box-shadow: 0 0 0 3px #fff, 0 0 0 5px #a9bfd8;
}
.assistant{
	position: absolute;
	right: 0;
	bottom: 176px;
	width: 50px;
	height: 45px;
	padding-left: 13px;
	border-radius: 23px 0 0 23px;
	background: #fff;
	box-shadow: 0 2px 8px rgba(0, 0, 0, .2);
}

/* taskbar */
.taskbar{
	flex: none;
	height: 60px;
	padding-bottom: 1px;
	display: grid;
	grid-template-columns: 1fr auto 1fr;
	align-items: center;
	border-top: 1px solid #45525d;
	background: #14263a;
	color: #fff;
	font-size: 14px;
	line-height: 20px;
}
.weather{
	display: flex;
	align-items: center;
	gap: 5px;
	padding-left: 28px;
	text-align: left;
}
.weather svg{
	margin-top: -5px;
}
.weather text{
	font-size: 14px;
	text-anchor: middle;
	fill: #fff;
}
.weather i{
	font-style: normal;
	color: #bcc5ce;
}
.apps{
	display: flex;
	align-items: center;
	gap: 5px;
}
.apps button{
	position: relative;
	width: 50px;
	height: 50px;
	display: flex;
	align-items: center;
	justify-content: center;
	border-radius: 5px;
}
.apps .focused{
	background: #283a4c;
}
.apps .running::after{
	content: "";
	position: absolute;
	left: 21px;
	bottom: 1px;
	width: 8px;
	height: 4px;
	border-radius: 2px;
	background: #8f9aa5;
}
.apps .focused::after{
	left: 15px;
	width: 20px;
	background: #4cc2ff;
}
.search{
	width: 273px;
	height: 38px;
	margin: 0 1px 0 3px;
	padding: 0 9px 0 14px;
	display: flex;
	align-items: center;
	gap: 13px;
	border-radius: 19px;
	background: #f4f6f8;
	overflow: hidden;
}
.search input{
	flex: 1;
	min-width: 0;
	padding: 0;
	border: 0;
	background: none;
	font: inherit;
	font-size: 16px;
}
.search input::placeholder{
	color: #5a5a5a;
}
.tray{
	display: flex;
	align-items: center;
	justify-content: flex-end;
	padding-right: 26px;
}
.tray > svg{
	margin-right: 22px;
}
.tray > svg:last-child{
	margin-right: 0;
}
.tray-group{
	display: flex;
	gap: 10px;
	margin-right: 21px;
}
.tray time{
	margin-right: 11px;
	text-align: right;
}
```
